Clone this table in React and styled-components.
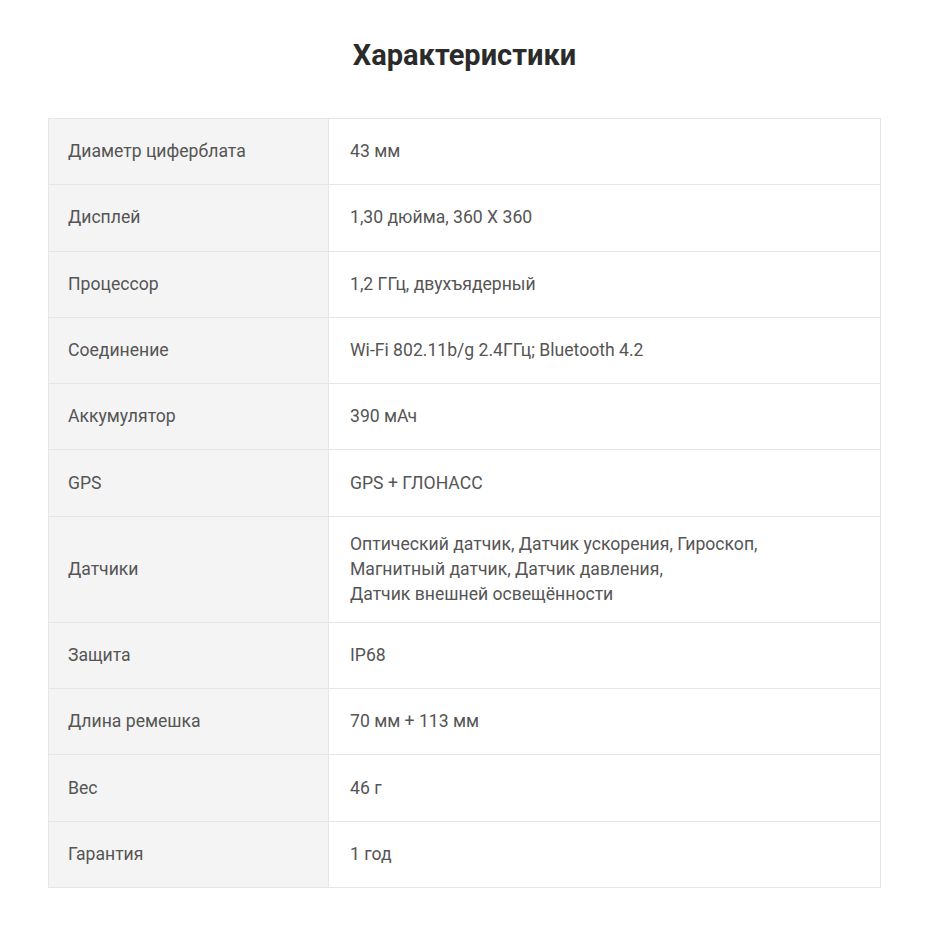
import React from "react";
import styled, { createGlobalStyle } from "styled-components";

const Global = createGlobalStyle`
  body {
    margin: 0;
    background: #fff;
    font-family: Roboto, "Noto Sans", sans-serif;
  }
`;

const Page = styled.div`
  display: flex;
  flex-direction: column;
  align-items: center;
  padding-top: 36px;
  padding-bottom: 52px;
`;

const Title = styled.h2`
  margin: 0 0 44px;
  font-size: 29px;
  line-height: 38px;
  font-weight: 700;
  color: #2b2b2b;
`;

const Table = styled.div`
  width: 831px;
  display: grid;
  grid-template-columns: 280px 1fr;
  border: 1px solid #e6e6e6;
  border-bottom: none;
`;

const Cell = styled.div`
  display: flex;
  align-items: center;
  min-height: 66.3px;
  box-sizing: border-box;
  padding: 15px 20px 15px ${(p) => (p.$label ? "19px" : "21px")};
  border-bottom: 1px solid #e6e6e6;
  border-right: ${(p) => (p.$label ? "1px solid #e6e6e6" : "none")};
  background: ${(p) => (p.$label ? "#f4f4f4" : "#fff")};
  color: #555;
  font-size: 17.6px;
  line-height: 25px;
`;

const specs = [
  ["Диаметр циферблата", "43 мм"],
  ["Дисплей", "1,30 дюйма, 360 X 360"],
  ["Процессор", "1,2 ГГц, двухъядерный"],
  ["Соединение", "Wi-Fi 802.11b/g 2.4ГГц; Bluetooth 4.2"],
  ["Аккумулятор", "390 мАч"],
  ["GPS", "GPS + ГЛОНАСС"],
  [
    "Датчики",
    <>
      Оптический датчик, Датчик ускорения, Гироскоп,
      <br />
      Магнитный датчик, Датчик давления,
      <br />
      Датчик внешней освещённости
    </>,
  ],
  ["Защита", "IP68"],
  ["Длина ремешка", "70 мм + 113 мм"],
  ["Вес", "46 г"],
  ["Гарантия", "1 год"],
];

export default function App() {
  return (
    <Page>
      <Global />
      <Title>Характеристики</Title>
      <Table>
        {specs.map(([k, v], i) => (
          <React.Fragment key={i}>
            <Cell $label>{k}</Cell>
            <Cell>
              <div>{v}</div>
            </Cell>
          </React.Fragment>
        ))}
      </Table>
    </Page>
  );
}
